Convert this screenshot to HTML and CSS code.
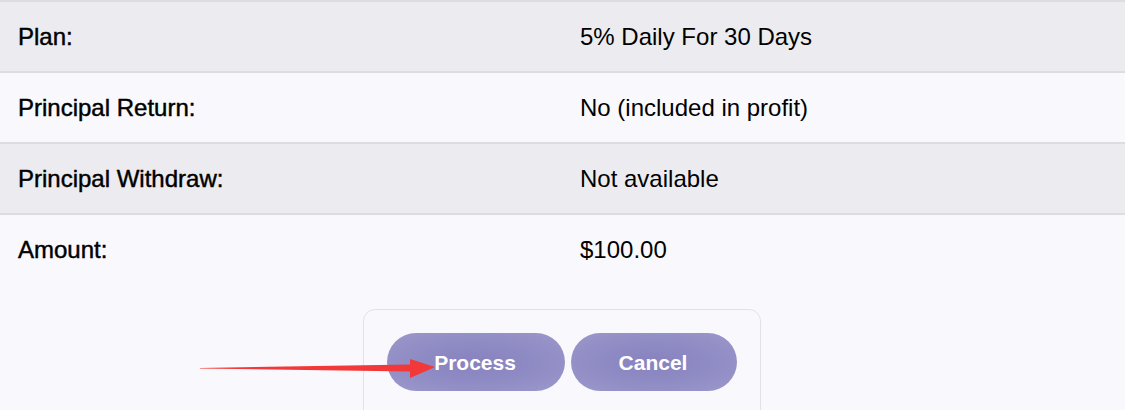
FILE: index.html
```html
<!DOCTYPE html>
<html>
<head>
<meta charset="utf-8">
<link rel="stylesheet" href="styles.css">
</head>
<body>
<div class="page">
  <table class="details">
    <tr class="row odd"><td class="label">Plan:</td><td class="value">5% Daily For 30 Days</td></tr>
    <tr class="row even"><td class="label">Principal Return:</td><td class="value">No (included in profit)</td></tr>
    <tr class="row odd"><td class="label">Principal Withdraw:</td><td class="value">Not available</td></tr>
    <tr class="row even last"><td class="label">Amount:</td><td class="value">$100.00</td></tr>
  </table>
  <div class="actions-wrap">
    <div class="actions">
      <button class="btn btn-process">Process</button>
      <button class="btn btn-cancel">Cancel</button>
    </div>
  </div>
  <svg class="arrow" width="240" height="30" viewBox="0 0 240 30">
    <polygon points="0,13 210,9.5 210,4 235,12 210,23 210,16.5 0,13.6" fill="#f23838"/>
  </svg>
</div>
</body>
</html>
```
FILE: styles.css
```css
html, body {
  margin: 0;
  padding: 0;
  background: #f9f9fd;
}
body {
  font-family: "Liberation Sans", Arial, sans-serif;
  color: #000;
  width: 1125px;
  height: 410px;
  overflow: hidden;
}
.page {
  position: relative;
  height: 410px;
}
.details {
  width: 100%;
  border-collapse: collapse;
  border-top: 2px solid #dcdde1;
}
.row td {
  height: 69px;
  padding: 0;
  font-size: 24px;
  vertical-align: middle;
  border-bottom: 2px solid #dcdde1;
}
.row.last td {
  border-bottom: none;
  height: 70px;
}
.row.odd td { background: #ececf0; }
.row.even td { background: #f9f9fd; }
.label {
  width: 562px;
  padding-left: 18px !important;
  -webkit-text-stroke: 0.45px #000;
}
.value {
  padding-left: 0;
}
.actions-wrap {
  display: flex;
  justify-content: center;
  margin-top: 24px;
  padding-right: 1px;
}
.actions {
  display: flex;
  gap: 6px;
  padding: 23px 23px 30px 23px;
  border: 1px solid #e1e1e8;
  border-radius: 12px;
}
.btn {
  height: 58px;
  padding: 0 48px 0 46px;
  border: none;
  border-radius: 29px;
  background: radial-gradient(ellipse at center, #8883bf 0%, #8e8ac3 45%, #9c99cc 100%);
  color: #fff;
  font-family: "Liberation Sans", Arial, sans-serif;
  font-weight: bold;
  font-size: 21px;
  line-height: 60px;
}
.btn-process { width: 178px; }
.btn-cancel { width: 166px; }
.arrow {
  position: absolute;
  left: 200px;
  top: 355px;
}
```
